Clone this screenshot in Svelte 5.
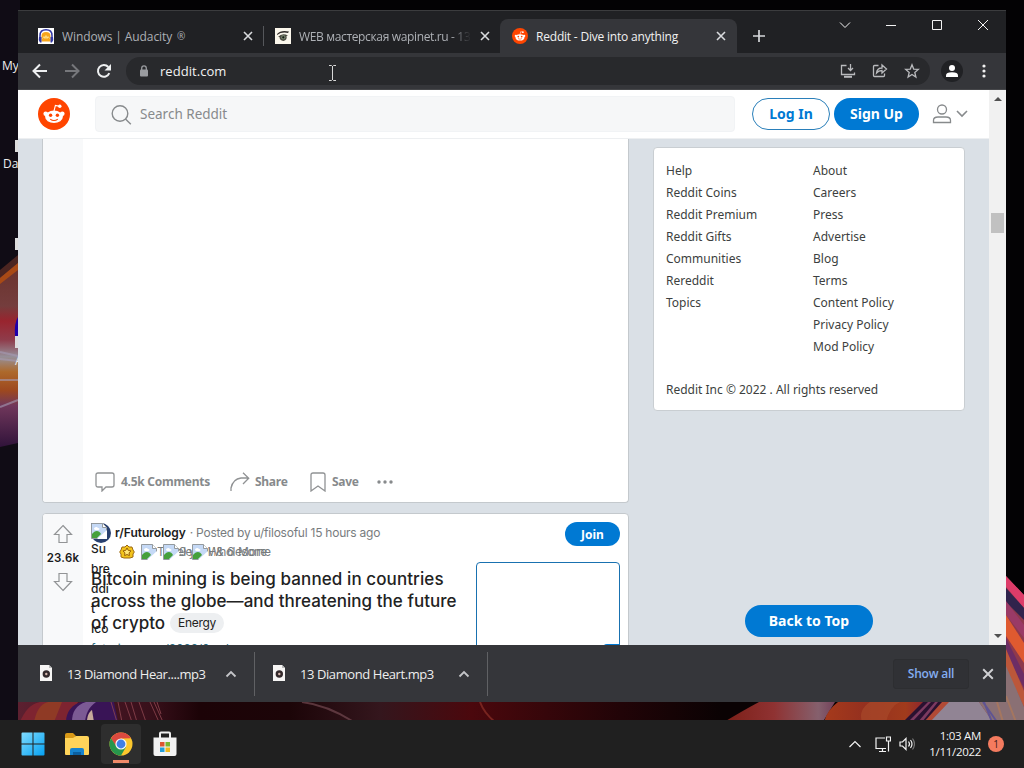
<script lang="ts">
	type Tab = { title: string; mark?: string; icon: string; active: boolean };

	const tabs: Tab[] = [
		{ title: 'Windows | Audacity', mark: '®', icon: 'audacity', active: false },
		{ title: 'WEB мастерская wapinet.ru - 13', icon: 'eye', active: false },
		{ title: 'Reddit - Dive into anything', icon: 'reddit', active: true }
	];

	const helpLinks = ['Help', 'Reddit Coins', 'Reddit Premium', 'Reddit Gifts', 'Communities', 'Rereddit', 'Topics'];
	const aboutLinks = [
		'About',
		'Careers',
		'Press',
		'Advertise',
		'Blog',
		'Terms',
		'Content Policy',
		'Privacy Policy',
		'Mod Policy'
	];

	const downloads = ['13 Diamond Hear....mp3', '13 Diamond Heart.mp3'];
</script>

{#snippet cross(size: number)}
	<svg width={size} height={size} viewBox="0 0 10 10" fill="none" stroke="currentColor" stroke-width="1.6">
		<path d="M1 1l8 8M9 1l-8 8" />
	</svg>
{/snippet}

{#snippet snoo(size: number)}
	<svg width={size} height={size} viewBox="0 0 32 32">
		<circle cx="16" cy="16" r="16" fill="#ff4500" />
		<circle cx="7.7" cy="15.8" r="2.3" fill="#fff" />
		<circle cx="24.3" cy="15.8" r="2.3" fill="#fff" />
		<ellipse cx="16" cy="18.8" rx="8.9" ry="6.2" fill="#fff" />
		<path d="M16 13l1.4-5.6 4.2 1" fill="none" stroke="#fff" stroke-width="1.1" />
		<circle cx="21.8" cy="8.3" r="1.7" fill="#fff" />
		<circle cx="12.6" cy="17.2" r="1.7" fill="#ff4500" />
		<circle cx="19.4" cy="17.2" r="1.7" fill="#ff4500" />
		<path d="M12.6 21.3c1.7 1.5 5.1 1.5 6.8 0" fill="none" stroke="#ff4500" stroke-width="1.1" stroke-linecap="round" />
	</svg>
{/snippet}

{#snippet broken()}
	<svg width="16" height="16" viewBox="0 0 16 16">
		<path d="M.5.5h11l4 4v11H.5z" fill="#c5d9f6" stroke="#949a9e" />
		<path d="M1 15v-4c3-4 7-4 9 0l-4 4z" fill="#45a03c" />
		<path d="M3 6c0-2 3-3 4-1 2 0 2 2 0 2H4z" fill="#fff" />
		<path d="M6 16L16 7v9z" fill="#fff" />
		<path d="M11.5.5v4h4" fill="#fff" stroke="#949a9e" />
	</svg>
{/snippet}

<div class="desktop">
	<svg class="wallpaper" width="1024" height="768" viewBox="0 0 1024 768">
		<defs>
			<linearGradient id="ribbon" x1="0" y1="0" x2="0" y2="1">
				<stop offset="0" stop-color="#68312b" />
				<stop offset=".25" stop-color="#743d3d" />
				<stop offset=".33" stop-color="#99242e" />
				<stop offset=".43" stop-color="#8f3c4b" />
				<stop offset=".52" stop-color="#969099" />
				<stop offset=".6" stop-color="#ad692b" />
				<stop offset=".7" stop-color="#9d481f" />
				<stop offset=".78" stop-color="#70375b" />
				<stop offset="1" stop-color="#30133a" />
			</linearGradient>
			<linearGradient id="floor">
				<stop offset="0" stop-color="#5c2030" />
				<stop offset=".13" stop-color="#39101b" />
				<stop offset=".18" stop-color="#1c0307" />
				<stop offset=".27" stop-color="#1c0508" />
				<stop offset=".36" stop-color="#34161d" />
				<stop offset=".45" stop-color="#4b080d" />
				<stop offset=".6" stop-color="#210407" />
				<stop offset=".7" stop-color="#0a0203" />
				<stop offset="1" stop-color="#0a0203" />
			</linearGradient>
			<linearGradient id="wave">
				<stop offset="0" stop-color="#7c1f17" />
				<stop offset=".45" stop-color="#8f3232" />
				<stop offset=".85" stop-color="#85606d" />
				<stop offset="1" stop-color="#73415a" />
			</linearGradient>
			<linearGradient id="flame">
				<stop offset="0" stop-color="#a63a1b" />
				<stop offset=".4" stop-color="#94301f" />
				<stop offset=".8" stop-color="#a13b1c" />
				<stop offset="1" stop-color="#8d2330" />
			</linearGradient>
		</defs>
		<rect width="1024" height="768" fill="#030204" />
		<rect width="20" height="722" fill="#100c15" />
		<path d="M0 276l18-17v184l-18 4z" fill="url(#ribbon)" />
		<path d="M0 270l18-15v8l-18 15z" fill="#4b2521" />
		<path d="M0 278l18-15v7l-18 14z" fill="#a84a16" />
		<path d="M0 352l18 4M0 359l18 2M0 380h18M0 407l18-7" stroke="#a59cb5" stroke-width="2" opacity=".6" />
		<path d="M18 702h1006v20H18z" fill="url(#floor)" />
		<path d="M20 722c4-10 10-18 20-20h38l-10 20z" fill="#7e2430" />
		<path d="M34 722c2-10 6-18 14-20h14l-8 20z" fill="#8f3a25" />
		<path d="M66 722c0-10 6-18 16-20h32l4 20z" fill="#391456" />
		<path d="M72 722c0-10 4-17 14-20h10c-8 6-10 12-11 20z" fill="#7c5a94" />
		<path d="M87 722c0-6 2-10 5-12l2 12z" fill="#c7a99b" />
		<path d="M111 702l6 20M118 702l4 20M125 702l7 20M131 702l6 20M139 702l7 20M150 702l9 20M154 702l9 20M157 702l4 12" fill="none" stroke="#8f4650" stroke-width=".8" />
		<path d="M302 702q25 3 52 20" fill="none" stroke="#81545c" stroke-width="2" opacity=".6" />
		<path d="M480 702q4 11 15 20" fill="none" stroke="#8d3028" stroke-width="2" opacity=".7" />
		<path d="M724 722q20-12 35-20h76l-11 18z" fill="url(#wave)" />
		<path d="M824 722q3-12 14-20h88l-20 20z" fill="url(#flame)" />
		<path d="M862 722q-4-12 8-20h30q-10 4-14 20z" fill="#a8482a" opacity=".7" />
		<path d="M903 722l20-20h22l-16 20z" fill="#2a1130" />
		<path d="M908 722l20-20h3l-19 20zM918 722l17-20h3l-16 20z" fill="#7c3a60" />
		<path d="M924 722l18-20h8l-17 20z" fill="#b14a35" />
		<path d="M930 722l19-20h33l14 20z" fill="#918494" />
		<path d="M1006 576l18 19v127h-31l-14-20h27z" fill="#8e394c" />
		<path d="M1006 576l18 19v13l-18-21z" fill="#dd3c69" />
		<path d="M1006 588l18 20v12l-18-18z" fill="#30234c" />
		<path d="M1006 601l18 24v13l-18-23z" fill="#9a3a66" />
		<path d="M1006 615l18 28v20l-18-27z" fill="#df5a30" />
		<path d="M1006 638l18 36v14l-18-35z" fill="#6c2d65" />
		<path d="M1006 649l18 42v16l-18-38z" fill="#bc573a" />
		<path d="M1006 666l18 41v15h-31l-14-20h27z" fill="#8a7074" />
		<path d="M997 722l-14-20M992 722l-8-20" stroke="#5f5492" stroke-width="2" />
		<path d="M1003 722l-6-20M1016 722l-10-26" stroke="#b77b52" stroke-width="2" opacity=".6" />
		<path d="M15 140h3v12h-3zM15 238h3v12h-3zM15 336h3v12h-3z" fill="#ddd" />
		<path d="M18 317v19h-3q-1-13 3-19z" fill="#2000a8" />
	</svg>
	<span class="shortcut my">My</span>
	<span class="shortcut data">Data</span>
	<span class="shortcut app-name">A</span>

	<div class="window">
		<div class="tab-strip">
			{#each tabs as tab}
				<div class="tab {tab.icon}" class:active={tab.active}>
					<div class="favicon">
						{#if tab.icon === 'audacity'}
							<svg width="16" height="16" viewBox="0 0 16 16">
								<rect width="16" height="16" fill="#fff" />
								<path d="M3.500 13.500V8q0-4 4.500-4t4.500 4v5.500z" fill="#f7a51c" />
								<path d="M4.500 10.500l1.500-2 1 2 1-3 1 3 1-2 1.500 2" fill="none" stroke="#ffe08a" />
								<path d="M2 10V7.500Q2 1.800 8 1.800t6 5.700V10" fill="none" stroke="#3339a6" stroke-width="1.5" />
								<path d="M1 9h2.500v5.500H2Q0 12 1 9zM15 9h-2.500v5.500H14q2-2.500 1-5.500z" fill="#3339a6" />
							</svg>
						{:else if tab.icon === 'eye'}
							<svg width="16" height="16" viewBox="0 0 16 16">
								<rect width="16" height="16" fill="#fbf7ec" />
								<path d="M2 6Q6 1.500 14 3.500l-1 1.500Q7 3.500 2 7z" fill="#302b28" />
								<path d="M3 9q4-4.500 10-1.500l-1.500.500q1 4-3 5Q4.500 12.500 4.500 9z" fill="#4b4a40" />
								<circle cx="8.300" cy="9.300" r="2.200" fill="#75846a" />
								<circle cx="8.300" cy="9.300" r="1.100" fill="#151512" />
							</svg>
						{:else}
							{@render snoo(16)}
						{/if}
					</div>
					<span class="tab-title">{tab.title}{#if tab.mark}<span class="mark">{tab.mark}</span>{/if}</span>
					<span class="tab-close">{@render cross(10)}</span>
				</div>
			{/each}
			<svg class="new-tab" width="12" height="12" viewBox="0 0 12 12" stroke="#d5d7da" stroke-width="1.7">
				<path d="M6 0v12M0 6h12" />
			</svg>
			<div class="controls">
				<svg width="46" height="30" viewBox="0 0 46 30"><path d="M18 12.500l5 5 5-5" /></svg>
				<svg width="46" height="30" viewBox="0 0 46 30"><path d="M18 15.500h10" /></svg>
				<svg width="46" height="30" viewBox="0 0 46 30"><path d="M18.500 10.500h9v9h-9z" /></svg>
				<svg width="46" height="30" viewBox="0 0 46 30"><path d="M18 10l10 10M28 10l-10 10" /></svg>
			</div>
		</div>

		<div class="toolbar">
			<div class="nav">
				<svg width="16" height="16" viewBox="0 0 16 16"><path d="M15 8H2M8 1.500L1.500 8 8 14.500" /></svg>
				<svg class="dim" width="16" height="16" viewBox="0 0 16 16"><path d="M1 8h13M8 1.500L14.500 8 8 14.500" /></svg>
				<svg width="16" height="16" viewBox="0 0 16 16">
					<path d="M13.300 10.200A5.900 5.900 0 1 1 12.300 4" />
					<path d="M15 1v6.500H8.500z" fill="#eef0f1" stroke="none" />
				</svg>
			</div>
			<div class="omnibox">
				<svg width="10" height="13" viewBox="0 0 10 13">
					<rect x="1" y="4.500" width="8" height="7" rx="1" fill="#9a9ca0" />
					<path d="M2.700 5V3.200a2.300 2.300 0 0 1 4.600 0V5" fill="none" stroke="#9a9ca0" stroke-width="1.300" />
				</svg>
				<span class="url">reddit.com</span>
				<div class="omni-icons">
					<svg width="16" height="16" viewBox="0 0 16 16">
						<path d="M6.500 2.500h-5v9h13V9.500M10.500 1v6.500M8 5l2.500 2.500L13 5" />
						<path d="M4 13.800h8" stroke-width="2" />
					</svg>
					<svg width="16" height="16" viewBox="0 0 16 16">
						<path d="M6.500 2.500h-4q-1 0-1 1v9q0 1 1 1h9q1 0 1-1V10.500" />
						<path d="M4.500 10q.5-5 5.500-5V2l4.500 4L10 10V7.500q-3.500 0-5.500 2.500z" />
					</svg>
					<svg width="16" height="16" viewBox="0 0 16 16">
						<path d="M8 1.800l1.700 4.300 4.600.3-3.500 3 1.100 4.600L8 11.500 4.100 14l1.100-4.600-3.500-3 4.600-.3z" />
					</svg>
				</div>
			</div>
			<svg class="profile" width="22" height="22" viewBox="0 0 22 22">
				<circle cx="11" cy="11" r="11" fill="#202124" />
				<circle cx="11" cy="8" r="3" fill="#fff" />
				<path d="M5 17v-1.500Q5 12.300 11 12.300t6 3.200V17z" fill="#fff" />
			</svg>
			<svg width="4" height="16" viewBox="0 0 4 16" fill="#f1f1f1">
				<circle cx="2" cy="3" r="1.600" /><circle cx="2" cy="8" r="1.600" /><circle cx="2" cy="13" r="1.600" />
			</svg>
		</div>

		<div class="page">
			<div class="page-main">
				<header>
					<div class="logo">{@render snoo(32)}</div>
					<div class="search">
						<svg width="21" height="21" viewBox="0 0 21 21" fill="none" stroke="#878a8c" stroke-width="1.400">
							<circle cx="9" cy="9.500" r="7.800" /><path d="M14.500 15l5.300 5.300" />
						</svg>
						<span>Search Reddit</span>
					</div>
					<button class="pill outline">Log In</button>
					<button class="pill">Sign Up</button>
					<svg class="user" width="20" height="20" viewBox="0 0 20 20">
						<circle cx="10" cy="5.500" r="4.500" />
						<path d="M1.500 18.500v-2q0-3.500 4.500-3.500h8q4.500 0 4.500 3.500v2z" />
					</svg>
					<svg class="user" width="12" height="8" viewBox="0 0 12 8"><path d="M1 1l5 5 5-5" /></svg>
				</header>

				<div class="content">
					<div class="feed">
						<article class="post first">
							<div class="votes"></div>
							<div class="actions">
								<svg width="20" height="20" viewBox="0 0 20 20">
									<path d="M3 1h14q2 0 2 2v10q0 2-2 2h-6l-4 4v-4H3q-2 0-2-2V3q0-2 2-2z" />
								</svg>
								<span class="comments">4.5k Comments</span>
								<svg width="20" height="20" viewBox="0 0 20 20">
									<path d="M1 19V16Q3 7 11 6h7.500M13 .8L18.700 6.300 13 12" />
								</svg>
								<span class="share">Share</span>
								<svg width="16" height="20" viewBox="0 0 16 20">
									<path d="M3 1h10q2 0 2 2v16l-7-5-7 5V3q0-2 2-2z" />
								</svg>
								<span class="save">Save</span>
								<svg width="16" height="4" viewBox="0 0 16 4" class="more">
									<circle cx="2" cy="2" r="1.700" /><circle cx="8" cy="2" r="1.700" /><circle cx="14" cy="2" r="1.700" />
								</svg>
							</div>
						</article>

						<article class="post second">
							<div class="votes">
								<svg width="20" height="20" viewBox="0 0 20 20"><path d="M10 1.500l8.500 9H14v8H6v-8H1.500z" /></svg>
								<span>23.6k</span>
								<svg width="20" height="20" viewBox="0 0 20 20"><path d="M10 18.500l8.500-9H14v-8H6v8H1.500z" /></svg>
							</div>
							<div class="post-body">
								<div class="meta">
									<div class="sub-icon">
										{@render broken()}
										<span class="alt">Su<br />bre<br />ddi<br />t<br />Ico<br />n</span>
									</div>
									<b>r/Futurology</b>
									<span class="posted">· Posted by u/filosoful 15 hours ago</span>
									<button class="join">Join</button>
								</div>
								<div class="awards">
									<svg width="16" height="16" viewBox="0 0 16 16">
										<path d="M8 1l2 2h3l1 3 1.300 2L14 10v3l-3 1H5l-3-1v-3L.7 8 2 6l1-3h3z" fill="#f2c31c" stroke="#9c6912" />
										<path d="M8 4l1.300 2.400 2.700.5-1.900 2 .3 2.700L8 10.500l-2.400 1.100.3-2.700-1.900-2 2.700-.5z" fill="#ffe677" stroke="#986008" />
									</svg>
									<div class="award a1">{@render broken()}<span>Timeless</span></div>
									<div class="award a2">{@render broken()}<span>9 yeeHaw</span></div>
									<div class="award a3">{@render broken()}<span>Wholesome</span><em>&amp; 6 More</em></div>
								</div>
								<div class="summary">
									<h3>
										<span class="line l1">Bitcoin mining is being banned in countries</span>
										<span class="line l2">across the globe—and threatening the future</span>
										<span class="line l3">of crypto <small>Energy</small></span>
										<a href="#top">futurism.com/2022/0...el</a>
									</h3>
									<div class="thumb"><i></i></div>
								</div>
							</div>
						</article>
					</div>

					<aside>
						<div class="links">
							<ul>
								{#each helpLinks as link}<li>{link}</li>{/each}
							</ul>
							<ul>
								{#each aboutLinks as link}<li>{link}</li>{/each}
							</ul>
							<p>Reddit Inc © 2022 . All rights reserved</p>
						</div>
						<button class="pill top">Back to Top</button>
					</aside>
				</div>
			</div>
			<div class="scrollbar">
				<svg width="8" height="4" viewBox="0 0 8 4"><path d="M0 4l4-4 4 4z" fill="#505050" /></svg>
				<div class="thumb-bar"></div>
				<svg width="8" height="4" viewBox="0 0 8 4"><path d="M0 0l4 4 4-4z" fill="#505050" /></svg>
			</div>
		</div>

		<div class="shelf">
			{#each downloads as file}
				<div class="download">
					<svg width="12" height="16" viewBox="0 0 12 16">
						<path d="M0 0h9l3 3v13H0z" fill="#f6f5f4" />
						<path d="M9 0v3h3" fill="#bbb" />
						<circle cx="6.300" cy="9" r="3.700" fill="#33292b" />
						<circle cx="6.300" cy="9" r="1.200" fill="#d5b8ae" />
					</svg>
					<span>{file}</span>
					<svg width="12" height="8" viewBox="0 0 12 8" fill="none" stroke="#c4c5c8" stroke-width="1.800"><path d="M1.500 6.500L6 2l4.500 4.500" /></svg>
				</div>
			{/each}
			<button class="show-all">Show all</button>
			<span class="shelf-close">{@render cross(12)}</span>
		</div>
	</div>

	<svg class="cursor" width="7" height="16" viewBox="0 0 7 16" fill="none" stroke="#d8d8d8">
		<path d="M0 .500h2.500l1 1 1-1H7M3.500 1v14M0 15.500h2.500l1-1 1 1H7" />
	</svg>

	<div class="taskbar">
		<div class="apps">
			<div class="app">
				<svg width="24" height="24" viewBox="0 0 24 24">
					<defs>
						<linearGradient id="win" x1="0" y1="0" x2="1" y2="1">
							<stop offset="0" stop-color="#80dcff" /><stop offset="1" stop-color="#05a1f2" />
						</linearGradient>
					</defs>
					<path d="M1.500.5h10v11h-11v-10q0-1 1-1zM12.500.5h10q1 0 1 1v10h-11zM.5 12.500h11v11h-10q-1 0-1-1zM12.500 12.500h11v10q0 1-1 1h-10z" fill="url(#win)" />
				</svg>
			</div>
			<div class="app">
				<svg width="26" height="24" viewBox="0 0 26 24">
					<path d="M1 3q0-2 2-2h6l3 3-3 4H1z" fill="#d99917" />
					<path d="M1 6h8l3-2h11q2 0 2 2v16q0 1-1 1H2q-1 0-1-1z" fill="#ffd45a" />
					<path d="M6 23v-5q0-2 2-2h10q2 0 2 2v5z" fill="#1683ce" />
					<path d="M9 20h8v3H9z" fill="#0b5f9f" />
				</svg>
			</div>
			<div class="app current">
				<svg width="24" height="24" viewBox="0 0 24 24">
					<circle cx="12" cy="12" r="11.500" fill="#fbc72d" />
					<path d="M2.040 6.250A11.500 11.500 0 0 1 21.960 6.250L12 6.500 7 15z" fill="#dc4a3f" />
					<path d="M2.040 6.250A11.500 11.500 0 0 0 12 23.500l5-8.600-8.600 1z" fill="#27964c" />
					<circle cx="12" cy="12" r="5.600" fill="#f8f8f8" />
					<circle cx="12" cy="12" r="4.400" fill="#3f80e7" />
				</svg>
			</div>
			<div class="app">
				<svg width="24" height="26" viewBox="0 0 24 26">
					<path d="M7 7V2.500q0-1 1-1h8q1 0 1 1V7" fill="none" stroke="#eee" stroke-width="2" />
					<path d="M.5 6.500h23V23q0 2-2 2h-19q-2 0-2-2z" fill="#f2f2f2" />
					<path d="M7 11h4.500v4.500H7z" fill="#dd5430" /><path d="M12.500 11H17v4.500h-4.500z" fill="#79b52f" />
					<path d="M7 16.500h4.500V21H7z" fill="#249ed9" /><path d="M12.500 16.500H17V21h-4.500z" fill="#f0b91c" />
				</svg>
			</div>
		</div>
		<div class="tray">
			<svg width="12" height="8" viewBox="0 0 12 8"><path d="M.500 7L6 1.500 11.500 7" /></svg>
			<svg class="screen" width="16" height="17" viewBox="0 0 16 17">
				<path d="M10 2H1v10.500h10M4 15.500h7M7.500 12.500v3M11.500 1h4v4h-4zM13.500 5v10.500" />
			</svg>
			<svg class="sound" width="16" height="14" viewBox="0 0 16 14">
				<path d="M1 5h2.500L7 1.500v11L3.500 9H1zM9.500 4.500q2 2.500 0 5M11.500 3q3 4 0 8" />
				<path d="M13.500 1.500q4 5.500 0 11" opacity=".4" />
			</svg>
			<div class="clock"><span>1:03 AM</span><span>1/11/2022</span></div>
			<span class="count">1</span>
		</div>
	</div>
</div>

<style>
	:global(body) {
		margin: 0;
		overflow: hidden;
	}

	.desktop {
		position: relative;
		width: 1024px;
		height: 768px;
		overflow: hidden;
		font-family: 'Open Sans', sans-serif;
		font-size: 12px;
	}

	.wallpaper {
		position: absolute;
		top: 0;
		left: 0;
	}

	svg {
		display: block;
		flex: none;
	}

	button {
		padding: 0;
		border: none;
		font-family: 'Noto Sans', sans-serif;
		font-weight: 700;
	}

	.shortcut {
		position: absolute;
		color: #eee;
		line-height: 16px;
	}

	.my {
		top: 58px;
		left: 2px;
	}

	.data {
		top: 156px;
		left: 3px;
	}

	.app-name {
		top: 353px;
		left: 15px;
	}

	.window {
		position: absolute;
		top: 10px;
		left: 18px;
		display: flex;
		flex-direction: column;
		width: 988px;
		height: 692px;
		background: #35363a;
	}

	.tab-strip {
		display: flex;
		height: 43px;
		box-sizing: border-box;
		border-top: 1px solid #3b3c3e;
		background: #202124;
		padding-left: 8px;
	}

	.tab {
		display: flex;
		align-items: center;
		box-sizing: border-box;
		width: 237px;
		height: 34px;
		margin-top: 8px;
		padding: 0 11px 0 12px;
		color: #adb0b5;
	}

	.audacity {
		width: 238px;
		background: linear-gradient(#55575b, #55575b) right center / 1px 20px no-repeat;
	}

	.eye {
		width: 236px;
		padding-left: 11px;
		padding-right: 10px;
	}

	.active {
		background: #35363a;
		border-radius: 8px 8px 0 0;
		color: #f1f1f1;
	}

	.tab-title {
		flex: 1;
		min-width: 0;
		margin-left: 8px;
		margin-right: 9px;
		overflow: hidden;
		white-space: nowrap;
		letter-spacing: -0.2px;
	}

	.eye .tab-title {
		letter-spacing: -0.35px;
		mask-image: linear-gradient(to right, #000 88%, transparent);
	}

	.audacity .tab-title {
		letter-spacing: -0.1px;
	}

	.mark {
		margin-left: 5px;
		font-size: 10px;
		line-height: 10px;
		vertical-align: 1px;
	}

	.tab-close {
		color: #d9dbde;
	}

	.new-tab {
		margin: 19px 0 0 16px;
	}

	.controls {
		display: flex;
		margin-left: auto;
	}

	.controls svg {
		fill: none;
		stroke: #f3f3f3;
		margin-top: -1px;
	}

	.toolbar {
		display: flex;
		align-items: center;
		height: 37px;
		box-sizing: border-box;
		padding: 0 20px 0 14px;
		border-bottom: 1px solid #46474a;
	}

	.nav {
		display: flex;
		gap: 16px;
	}

	.nav svg {
		fill: none;
		stroke: #eef0f1;
		stroke-width: 2;
	}

	.nav .dim {
		stroke: #76777b;
	}

	.omnibox {
		display: flex;
		align-items: center;
		box-sizing: border-box;
		width: 804px;
		height: 28px;
		margin-left: 14px;
		padding: 0 10px 0 13px;
		border-radius: 14px;
		background: #28292c;
	}

	.url {
		margin-left: 11px;
		color: #f1f1f1;
		font-size: 13px;
		letter-spacing: 0.05px;
	}

	.omni-icons {
		display: flex;
		gap: 16px;
		margin-left: auto;
	}

	.omni-icons svg {
		fill: none;
		stroke: #b9babd;
		stroke-width: 1.3;
	}

	.profile {
		margin: 0 auto 0 11px;
	}

	.page {
		display: flex;
		height: 555px;
		overflow: hidden;
	}

	.page-main {
		width: 971px;
		height: 555px;
		overflow: hidden;
		background: #dae0e6;
	}

	header {
		display: flex;
		align-items: center;
		height: 49px;
		box-sizing: border-box;
		padding-left: 20px;
		border-bottom: 1px solid #edeff1;
		background: #fff;
	}

	.search {
		display: flex;
		align-items: center;
		width: 640px;
		height: 36px;
		box-sizing: border-box;
		margin: 0 17px 0 25px;
		padding-left: 15px;
		border: 1px solid #f1f3f5;
		border-radius: 4px;
		background: #f6f7f8;
		color: #878a8c;
		font-family: 'Noto Sans', sans-serif;
		font-size: 13.5px;
	}

	.search span {
		margin-left: 8px;
	}

	.pill {
		width: 85px;
		height: 32px;
		padding-bottom: 2px;
		border-radius: 16px;
		background: #0079d3;
		color: #fff;
		font-size: 14px;
	}

	.pill.outline {
		width: 78px;
		margin-right: 4px;
		border: 1px solid #2a7fba;
		background: #fff;
		color: #0079d3;
	}

	.user {
		margin-left: 13px;
		fill: none;
		stroke: #878a8c;
		stroke-width: 1.3;
	}

	.user + .user {
		margin-left: 4px;
		stroke-width: 1.6;
	}

	.content {
		display: flex;
		gap: 24px;
		padding-left: 24px;
	}

	.post {
		display: flex;
		box-sizing: border-box;
		width: 587px;
		border: 1px solid #c4c9cd;
		border-radius: 4px;
		background: #fff;
		overflow: hidden;
	}

	.first {
		height: 364px;
		border-top: none;
		border-radius: 0 0 4px 4px;
	}

	.second {
		height: 160px;
		margin-top: 10px;
	}

	.votes {
		display: flex;
		flex-direction: column;
		align-items: center;
		flex: none;
		width: 40px;
		padding-top: 10px;
		background: #f8f9fa;
		color: #1a1a1b;
		font-weight: 700;
	}

	.votes svg {
		fill: none;
		stroke: #929496;
		stroke-width: 1.2;
	}

	.votes span {
		height: 28px;
		font: 600 11.5px/28px Inter, sans-serif;
		letter-spacing: 0.25px;
	}

	.actions {
		display: flex;
		align-items: center;
		align-self: flex-end;
		height: 40px;
		padding-left: 12px;
		color: #878a8c;
		font: 700 12px 'Noto Sans', sans-serif;
		letter-spacing: -0.27px;
	}

	.actions span {
		padding-bottom: 1px;
	}

	.actions svg {
		fill: none;
		stroke: #909294;
		stroke-width: 1.3;
	}

	.actions .more {
		fill: #878a8c;
		stroke: none;
	}

	.comments {
		width: 109px;
		margin-left: 6px;
	}

	.share {
		width: 55px;
		margin-left: 5px;
	}

	.save {
		width: 45px;
		margin-left: 6px;
	}

	.post-body {
		flex: 1;
		padding: 9px 8px 0;
		font-family: Inter, sans-serif;
	}

	.meta {
		display: flex;
		align-items: center;
		height: 20px;
		color: #1c1c1c;
	}

	.sub-icon {
		position: relative;
		width: 20px;
		height: 20px;
		border-radius: 0 10px 10px 10px;
		background: #28406f;
	}

	.alt {
		position: absolute;
		top: 16px;
		left: 0;
		font: 500 12px/20px Inter, sans-serif;
		color: #1c1c1c;
	}

	.meta b {
		margin-left: 4px;
		padding-bottom: 2px;
		font-weight: 600;
		letter-spacing: -0.05px;
	}

	.posted {
		margin-left: 4px;
		padding-bottom: 2px;
		color: #787c7e;
		letter-spacing: -0.24px;
	}

	.join {
		width: 55px;
		height: 24px;
		margin-left: auto;
		margin-top: 2px;
		border-radius: 12px;
		background: #0079d3;
		color: #fff;
		font-size: 12px;
	}

	.awards {
		display: flex;
		height: 18px;
		padding-left: 28px;
		color: #787c7e;
	}

	.awards > svg {
		margin-top: 1px;
	}

	.award {
		position: relative;
		width: 22px;
		padding-top: 1px;
		margin-left: 6px;
	}

	.a2,
	.a3 {
		margin-left: 0;
	}

	.a2 {
		width: 29px;
	}

	.award span,
	.award em {
		position: absolute;
		top: 0;
		left: 16px;
		width: 36px;
		overflow: hidden;
		font-style: normal;
		white-space: nowrap;
		line-height: 17px;
		letter-spacing: -0.5px;
	}

	.a3 span {
		width: 64px;
	}

	.award em {
		left: 24px;
		width: 56px;
		letter-spacing: 0;
	}

	.summary {
		display: flex;
		justify-content: space-between;
	}

	h3 {
		width: 376px;
		margin: 7px 0 0;
		font: 500 17px/22px Inter, sans-serif;
		color: #222;
	}

	.line {
		display: block;
		white-space: nowrap;
	}

	.l1 {
		letter-spacing: 0.09px;
	}

	.l2 {
		letter-spacing: 0.04px;
	}

	.l3 {
		display: flex;
		align-items: center;
		gap: 5px;
	}

	small {
		height: 20px;
		padding: 0 8px;
		border-radius: 10px;
		background: #edeff1;
		font: 400 12px/20px Inter, sans-serif;
		letter-spacing: -0.3px;
	}

	h3 a {
		display: block;
		color: #2b6f84;
		font: 400 12px/18px Inter, sans-serif;
		letter-spacing: -0.12px;
		text-decoration: none;
		margin-top: 6px;
	}

	.thumb {
		display: flex;
		align-items: flex-end;
		justify-content: flex-end;
		width: 142px;
		height: 96px;
		margin-top: 1px;
		border: 1px solid #1971b0;
		border-radius: 4px;
		box-sizing: content-box;
	}

	.thumb i {
		width: 16px;
		height: 15px;
		border-radius: 4px 0 0;
		background: #0079d3;
	}

	aside {
		display: flex;
		flex-direction: column;
		align-items: center;
		width: 312px;
		padding-top: 8px;
	}

	.links {
		display: grid;
		grid-template-columns: 147px 1fr;
		width: 312px;
		height: 264px;
		box-sizing: border-box;
		padding: 12px 12px 11px;
		border: 1px solid #c9ced2;
		border-radius: 4px;
		background: #fff;
		color: #3d3f40;
		font: 12px/22px 'Noto Sans', sans-serif;
	}

	ul {
		margin: 0;
		padding: 0;
		list-style: none;
	}

	.links p {
		grid-column: 1 / 3;
		margin: 0;
		align-self: end;
		line-height: 18px;
	}

	.top {
		width: 128px;
		margin-top: 194px;
		flex: none;
	}

	.scrollbar {
		display: flex;
		flex-direction: column;
		align-items: center;
		justify-content: space-between;
		width: 17px;
		padding: 7px 0;
		background: #f1f1f1;
	}

	.thumb-bar {
		width: 13px;
		height: 20px;
		margin: 112px 0 auto;
		background: #c1c1c1;
	}

	.shelf {
		display: flex;
		align-items: center;
		height: 57px;
		color: #eee;
	}

	.download {
		display: flex;
		align-items: center;
		box-sizing: border-box;
		height: 44px;
		width: 237px;
		padding: 0 17px 0 22px;
		border-right: 1px solid #606164;
	}

	.download + .download {
		width: 233px;
		padding-left: 18px;
	}

	.download span {
		flex: 1;
		margin-left: 15px;
		font-size: 13px;
		letter-spacing: -0.42px;
		white-space: nowrap;
	}

	.download > svg:first-child {
		margin-bottom: 2px;
	}

	.show-all {
		width: 76px;
		height: 30px;
		margin-left: auto;
		padding-bottom: 1px;
		border: 1px solid #2d2e31;
		border-radius: 3px;
		background: #303135;
		color: #84adf0;
		font: 600 12px 'Open Sans', sans-serif;
		letter-spacing: -0.2px;
	}

	.shelf-close {
		margin: 0 12px 0 13px;
		color: #d0d1d4;
	}

	.cursor {
		position: absolute;
		top: 65px;
		left: 329px;
	}

	.taskbar {
		position: absolute;
		left: 0;
		bottom: 0;
		display: flex;
		justify-content: space-between;
		width: 1024px;
		height: 48px;
		background: #202020;
	}

	.apps {
		display: flex;
		gap: 4px;
		padding: 4px 0 0 13px;
	}

	.app {
		display: flex;
		align-items: center;
		justify-content: center;
		width: 40px;
		height: 40px;
		border-radius: 4px;
	}

	.current {
		background: linear-gradient(#f08a69, #f08a69) center 36px / 16px 3px no-repeat #2e2e2e;
	}

	.tray {
		display: flex;
		align-items: center;
		padding-right: 20px;
		color: #f4f4f4;
	}

	.tray svg {
		fill: none;
		stroke: #f4f4f4;
		stroke-width: 1.2;
	}

	.screen {
		margin-left: 14px;
	}

	.sound {
		margin-left: 8px;
	}

	.clock {
		display: flex;
		flex-direction: column;
		width: 66px;
		text-align: right;
		line-height: 16px;
		font-size: 11.5px;
		letter-spacing: -0.3px;
	}

	.count {
		width: 16px;
		height: 16px;
		margin-left: 7px;
		border-radius: 50%;
		background: #f47b5f;
		color: #40201a;
		font-size: 10px;
		line-height: 16px;
		text-align: center;
	}
</style>
